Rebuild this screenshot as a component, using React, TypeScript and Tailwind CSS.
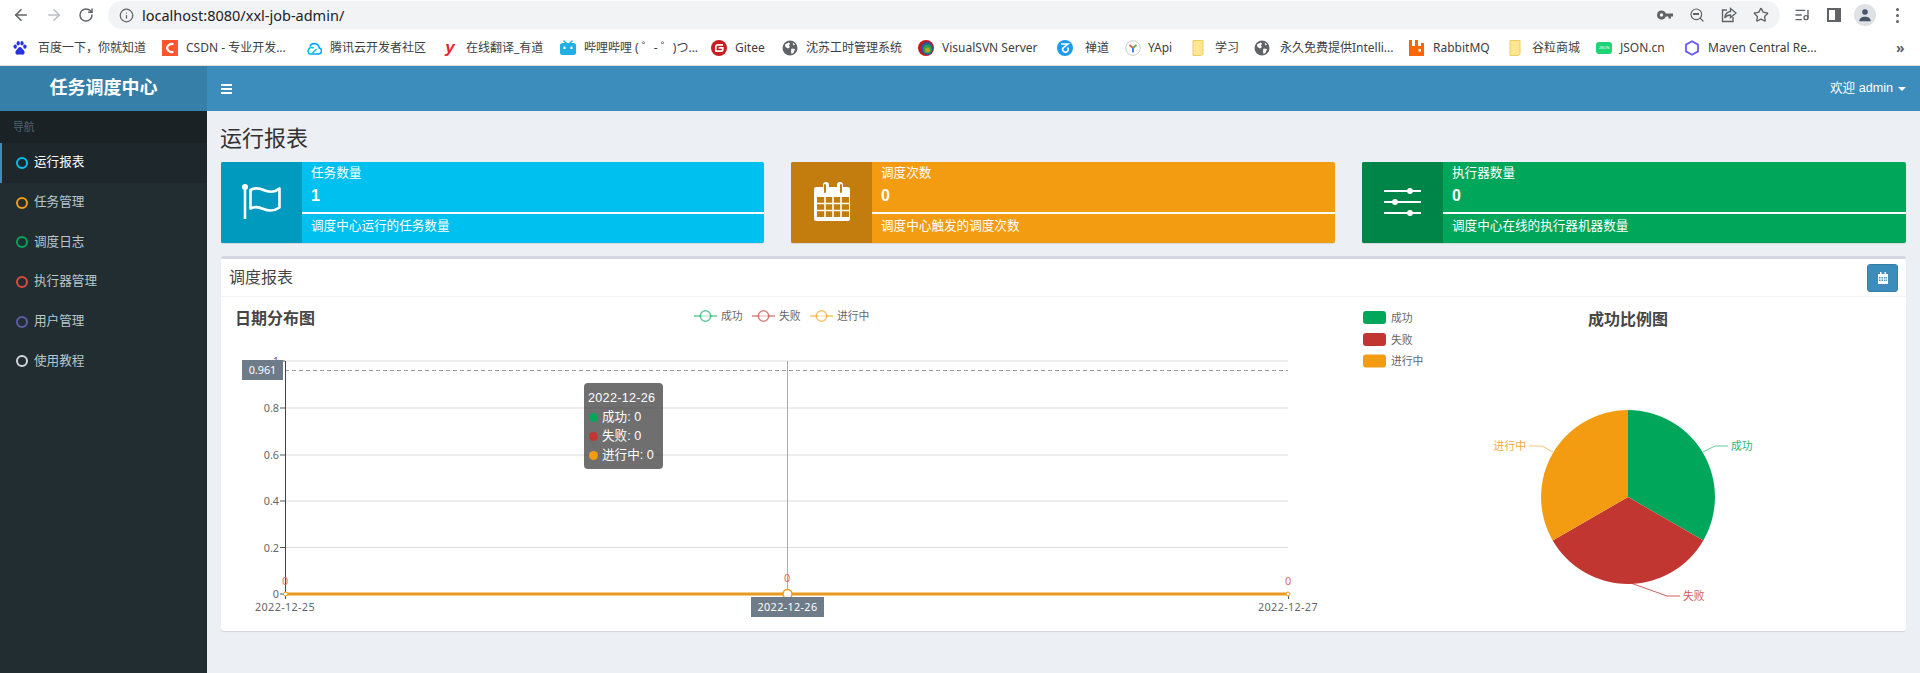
import { ArrowLeft, ArrowRight, Info, ListMusic, RotateCw, Search, Star } from 'lucide-react'

const CJK = 'font-["Liberation_Sans","Noto_Sans_CJK_SC",sans-serif]'

type Mark = 'baidu' | 'csdn' | 'cloud' | 'youdao' | 'bili' | 'gitee' | 'globe' | 'svn' | 'zentao' | 'yapi' | 'folder' | 'rabbit' | 'json' | 'maven'

const bookmarks: Array<{ mark: Mark; label: string; width: string; gap: string }> = [
    { mark: 'baidu', label: '百度一下，你就知道', width: 'w-[150px]', gap: 'ml-[10px]' },
    { mark: 'csdn', label: 'CSDN - 专业开发...', width: 'w-[144px]', gap: 'ml-[8px]' },
    { mark: 'cloud', label: '腾讯云开发者社区', width: 'w-[136px]', gap: 'ml-[8px]' },
    { mark: 'youdao', label: '在线翻译_有道', width: 'w-[118px]', gap: 'ml-[8px]' },
    { mark: 'bili', label: '哔哩哔哩 ( ゜- ゜)つ...', width: 'w-[151px]', gap: 'ml-[8px]' },
    { mark: 'gitee', label: 'Gitee', width: 'w-[71px]', gap: 'ml-[8px]' },
    { mark: 'globe', label: '沈苏工时管理系统', width: 'w-[136px]', gap: 'ml-[8px]' },
    { mark: 'svn', label: 'VisualSVN Server', width: 'w-[139px]', gap: 'ml-[8px]' },
    { mark: 'zentao', label: '禅道', width: 'w-[68px]', gap: 'ml-[12px]' },
    { mark: 'yapi', label: 'YApi', width: 'w-[65px]', gap: 'ml-[7px]' },
    { mark: 'folder', label: '学习', width: 'w-[64px]', gap: 'ml-[9px]' },
    { mark: 'globe', label: '永久免费提供Intelli...', width: 'w-[155px]', gap: 'ml-[10px]' },
    { mark: 'rabbit', label: 'RabbitMQ', width: 'w-[98px]', gap: 'ml-[8px]' },
    { mark: 'folder', label: '谷粒商城', width: 'w-[89px]', gap: 'ml-[9px]' },
    { mark: 'json', label: 'JSON.cn', width: 'w-[88px]', gap: 'ml-[8px]' },
    { mark: 'maven', label: 'Maven Central Re...', width: 'w-[132px]', gap: 'ml-[8px]' },
]

const navItems = [
    { label: '运行报表', ring: 'border-[#00c0ef]', active: true },
    { label: '任务管理', ring: 'border-[#f39c12]', active: false },
    { label: '调度日志', ring: 'border-[#00a65a]', active: false },
    { label: '执行器管理', ring: 'border-[#dd4b39]', active: false },
    { label: '用户管理', ring: 'border-[#605ca8]', active: false },
    { label: '使用教程', ring: 'border-[#d2d6de]', active: false },
]

function Favicon({ mark }: { mark: Mark }) {
    switch (mark) {
        case 'baidu':
            return (
                <svg viewBox="0 0 16 16" className="h-4 w-4 shrink-0" fill="#2932e1">
                    <ellipse cx="3.2" cy="6.6" rx="1.7" ry="2.2" />
                    <ellipse cx="6.2" cy="3.2" rx="1.6" ry="2.2" />
                    <ellipse cx="10" cy="3.2" rx="1.6" ry="2.2" />
                    <ellipse cx="12.9" cy="6.6" rx="1.7" ry="2.2" />
                    <path d="M8 7c-1.6 0-2 1.6-3.2 2.7C3.6 10.8 3 12 3.6 13.4c.6 1.3 2 1.5 3 1.2.9-.2 1.9-.2 2.8 0 1 .3 2.4.1 3-1.2.6-1.4 0-2.6-1.2-3.7C10 8.6 9.6 7 8 7z" />
                </svg>
            )
        case 'csdn':
            return (
                <svg viewBox="0 0 16 16" className="h-4 w-4 shrink-0">
                    <rect width="16" height="16" fill="#fc5531" />
                    <path d="M11.5 4.2A5 5 0 0 0 5 8a5 5 0 0 0 6.5 3.8" fill="none" stroke="#fff" strokeWidth="2.2" />
                </svg>
            )
        case 'cloud':
            return (
                <svg viewBox="0 0 16 16" className="h-4 w-4 shrink-0" fill="none" strokeWidth="1.6">
                    <path d="M3.500 14h9a3 3 0 0 0 .8-5.900A5 5 0 0 0 3.800 6.500" stroke="#00a3ff" />
                    <path d="M10.500 9 6.500 13" stroke="#00c8dc" />
                    <path d="M7.800 8.200A3 3 0 1 0 3.500 14" stroke="#00c8dc" />
                </svg>
            )
        case 'youdao':
            return <span className='w-4 shrink-0 text-center font-["Liberation_Sans",sans-serif] text-[17px] font-bold italic leading-4 text-[#e8232a]'>y</span>
        case 'bili':
            return (
                <svg viewBox="0 0 16 16" className="h-4 w-4 shrink-0">
                    <path d="M4 1l2.4 2.4M12 1 9.6 3.4" stroke="#20b0e3" strokeWidth="1.5" strokeLinecap="round" />
                    <rect y="3" width="16" height="12" rx="2.5" fill="#20b0e3" />
                    <rect x="3.5" y="6.6" width="2" height="2.4" fill="#fff" />
                    <rect x="10.5" y="6.6" width="2" height="2.4" fill="#fff" />
                </svg>
            )
        case 'gitee':
            return (
                <svg viewBox="0 0 16 16" className="h-4 w-4 shrink-0">
                    <circle cx="8" cy="8" r="8" fill="#c71d23" />
                    <path d="M12 4.8H7a2.2 2.2 0 0 0-2.2 2.2v4.2h5a2 2 0 0 0 2-2V7.8H7.6" fill="none" stroke="#fff" strokeWidth="1.7" />
                </svg>
            )
        case 'globe':
            return (
                <svg viewBox="0 0 16 16" className="h-4 w-4 shrink-0">
                    <circle cx="8" cy="8" r="7.5" fill="#5f6368" />
                    <path d="M3 4.5 6.5 2.5l1.5 1-1 2 1 1.5-2 1.5L3.5 7zM9.5 8.5l3.5.5-1.5 4-2 1-.5-3zM10.500 2.500l2.500 2-1.500 1z" fill="#fff" />
                </svg>
            )
        case 'svn':
            return (
                <svg viewBox="0 0 16 16" className="h-4 w-4 shrink-0">
                    <circle cx="8" cy="8" r="8" fill="#c6161f" />
                    <ellipse cx="9" cy="8.500" rx="6" ry="6.500" fill="#1a5fa8" />
                    <circle cx="9.500" cy="9" r="4.500" fill="#2f9d46" />
                    <circle cx="9.500" cy="10" r="2.500" fill="#b7a51c" />
                </svg>
            )
        case 'zentao':
            return (
                <svg viewBox="0 0 16 16" className="h-4 w-4 shrink-0">
                    <circle cx="8" cy="8" r="8" fill="#1d9bf0" />
                    <path d="M4 4h7L6 8a2.800 2.800 0 1 0 4.500-.5" fill="none" stroke="#fff" strokeWidth="1.600" />
                </svg>
            )
        case 'yapi':
            return (
                <svg viewBox="0 0 16 16" className="h-4 w-4 shrink-0" fill="none">
                    <circle cx="8" cy="8" r="7.300" fill="#fff" stroke="#ccc" />
                    <path d="M8 8 4.500 5" stroke="#e65a4f" strokeWidth="1.800" />
                    <path d="M8 8l3.500-3" stroke="#5fb548" strokeWidth="1.800" />
                    <path d="M8 8v4.500" stroke="#2f7fe6" strokeWidth="1.800" />
                </svg>
            )
        case 'folder':
            return (
                <svg viewBox="0 0 16 16" className="h-4 w-4 shrink-0">
                    <path d="M3 .5h10v13.500l-2 1.500H3z" fill="#ffe594" stroke="#f0cc5a" />
                </svg>
            )
        case 'rabbit':
            return (
                <svg viewBox="0 0 16 16" className="h-4 w-4 shrink-0">
                    <path fillRule="evenodd" d="M0 0h3v6h3V0h3v6h3V3h3v13H0zM9.500 9v2.500h2.500V9z" fill="#ff6600" />
                </svg>
            )
        case 'json':
            return (
                <span className='flex h-3 w-4 shrink-0 items-center justify-center rounded-[3px] bg-[#1ed477] font-["Liberation_Sans",sans-serif] text-[4px] text-white'>JSON</span>
            )
        case 'maven':
            return (
                <svg viewBox="0 0 16 16" className="h-4 w-4 shrink-0" fill="none">
                    <path d="M8 1.200 14 4.600v6.800l-6 3.400-6-3.400V4.600z" stroke="#6a5cf0" strokeWidth="1.800" />
                </svg>
            )
    }
}

function BrowserChrome() {
    return (
        <div className='h-[66px] shrink-0 border-b border-[#dadce0] bg-white font-["Noto_Sans","Noto_Sans_CJK_SC",sans-serif] text-[#3c4043]'>
            <div className="flex h-[30px] items-center">
                <div className="flex w-[108px] items-center">
                    <ArrowLeft className="ml-[12px] h-[18px] w-[18px] text-[#5f6368]" strokeWidth={2.2} />
                    <ArrowRight className="ml-[15px] h-[18px] w-[18px] text-[#bcbfc4]" strokeWidth={2.2} />
                    <RotateCw className="ml-[15px] h-[16px] w-[16px] text-[#5f6368]" strokeWidth={2.2} />
                </div>
                <div className="flex h-[28px] w-[1672px] items-center rounded-full bg-[#f1f3f4]">
                    <Info className="ml-[11px] h-[15px] w-[15px] text-[#5f6368]" strokeWidth={2} />
                    <span className="ml-[8px] text-[14.500px] leading-none text-[#202124]">localhost:8080/xxl-job-admin/</span>
                    <div className="ml-auto flex items-center gap-[16px] pr-[11px] text-[#5f6368]">
                        <svg viewBox="0 0 16 16" className="h-4 w-4" fill="currentColor">
                            <path fillRule="evenodd" d="M4.500 3.500a4.500 4.500 0 0 1 4.300 3H16v3h-2v2h-2.500v-2H8.800a4.500 4.500 0 1 1-4.300-6zm0 2.800a1.700 1.700 0 1 0 0 3.400 1.700 1.700 0 0 0 0-3.400z" />
                        </svg>
                        <div className="relative">
                            <Search className="h-4 w-4" strokeWidth={1.800} />
                            <div className="absolute left-[3.500px] top-[6px] h-[1.500px] w-[6px] bg-[#5f6368]" />
                        </div>
                        <svg viewBox="0 0 16 16" className="h-4 w-4" fill="none" stroke="currentColor" strokeWidth="1.400">
                            <path d="M6 3H1.500v11.500h10.500V10" />
                            <path d="M9.500 1.500 15 6l-5.500 4.500V8C7 8 5 9 3.800 11c.2-3.500 2.200-6 5.700-6.500z" />
                        </svg>
                        <Star className="h-4 w-4" strokeWidth={2} />
                    </div>
                </div>
                <div className="flex items-center text-[#5f6368]">
                    <ListMusic className="ml-[14px] h-4 w-4" strokeWidth={2} />
                    <svg viewBox="0 0 14 14" className="ml-[17px] h-[14px] w-[14px]">
                        <rect x="1" y="1" width="12" height="12" fill="none" stroke="currentColor" strokeWidth="2" />
                        <rect x="8" y="1" width="5" height="12" fill="currentColor" />
                    </svg>
                    <div className="ml-[13px] flex h-[22px] w-[22px] items-center justify-center rounded-full bg-[#dfe1e5]">
                        <svg viewBox="0 0 16 16" className="h-[14px] w-[14px]" fill="#475569">
                            <circle cx="8" cy="4.500" r="3.200" />
                            <path d="M1.500 15c0-3.500 3-5 6.500-5s6.500 1.500 6.500 5z" />
                        </svg>
                    </div>
                    <div className="ml-[20px] flex flex-col gap-[3px]">
                        <span className="h-[3px] w-[3px] rounded-full bg-[#5f6368]" />
                        <span className="h-[3px] w-[3px] rounded-full bg-[#5f6368]" />
                        <span className="h-[3px] w-[3px] rounded-full bg-[#5f6368]" />
                    </div>
                </div>
            </div>
            <div className="flex h-[35px] items-center pl-[12px] text-[12px] leading-none">
                {bookmarks.map((b, i) => (
                    <div key={i} className={`flex shrink-0 items-center ${b.width}`}>
                        <Favicon mark={b.mark} />
                        <span className={`whitespace-nowrap ${b.gap}`}>{b.label}</span>
                    </div>
                ))}
                <span className="ml-[80px] text-[14px] font-bold text-[#5f6368]">»</span>
            </div>
        </div>
    )
}

function StatCard({ icon, bg, iconBg, title, value, desc }: { icon: React.ReactNode; bg: string; iconBg: string; title: string; value: string; desc: string }) {
    return (
        <div className={`flex h-[81px] overflow-hidden rounded-[2px] text-white shadow-[0_1px_1px_rgba(0,0,0,0.1)] ${bg}`}>
            <div className={`flex w-[81px] shrink-0 items-center justify-center pb-[2px] ${iconBg}`}>{icon}</div>
            <div className="flex min-w-0 flex-1 flex-col">
                <div className="mt-[2px] px-[9px] text-[12.600px] leading-[18px]">{title}</div>
                <div className="mt-[3px] px-[9px] text-[16px] font-bold leading-[22px]">{value}</div>
                <div className="mt-[5px] h-[2px] bg-white" />
                <div className="px-[9px] text-[12.600px] leading-[24px]">{desc}</div>
            </div>
        </div>
    )
}

const FlagIcon = (
    <svg viewBox="0 0 41 35" className="h-[35px] w-[41px]" fill="none" stroke="#fff" strokeWidth="2.600">
        <path d="M4 3v32" />
        <circle cx="4" cy="3" r="3" fill="#fff" stroke="none" />
        <path d="M9.500 6C14 3.500 18 4 22.500 6s11 2.500 16-1.500v19c-5 3.500-11 3.500-16 1.500S14 22 9.500 24.500z" strokeLinejoin="round" />
    </svg>
)

const CalendarIcon = (
    <svg viewBox="0 0 40 42" className="h-[42px] w-[40px]">
        <path d="M6 6h5V4a3 3 0 0 1 6 0v2h8V4a3 3 0 0 1 6 0v2h5a2 2 0 0 1 2 2v30a2 2 0 0 1-2 2H4a2 2 0 0 1-2-2V8a2 2 0 0 1 2-2z" fill="#fff" />
        <path d="M13 4v7M29 4v7" stroke="#c27d0e" strokeWidth="2" strokeLinecap="round" />
        <path d="M5 16h32v20H5z" fill="#c27d0e" />
        <path d="M5 22.500h32M5 29.500h32M13 15v22M21 15v22M29 15v22" stroke="#fff" strokeWidth="1.600" />
    </svg>
)

const SlidersIcon = (
    <svg viewBox="0 0 37 28" className="h-[28px] w-[37px]" fill="#fff" stroke="#fff" strokeWidth="2.200">
        <path d="M0 3h37M0 14h37M0 25h37" />
        <circle cx="26" cy="3" r="1.800" />
        <circle cx="11" cy="14" r="1.800" />
        <circle cx="26" cy="25" r="1.800" />
    </svg>
)

const chartText = 'font-["Noto_Sans","Noto_Sans_CJK_SC",sans-serif]'

function LineChart() {
    const rows = [361, 408, 455, 501, 547.500, 594]
    const ticks = ['1', '0.8', '0.6', '0.4', '0.2', '0']
    const legend = [
        { x: 694, text: '成功', color: '#00a65a' },
        { x: 752, text: '失败', color: '#c23632' },
        { x: 810, text: '进行中', color: '#f39c12' },
    ]
    return (
        <svg viewBox="221 297 1125 334" className={`h-[334px] w-[1125px] shrink-0 ${chartText}`}>
            <text x="235" y="324" fontSize="16" fontWeight="700" fill="#464646">日期分布图</text>
            {legend.map((l) => (
                <g key={l.text}>
                    <path d={`M${l.x} 316h23`} stroke={l.color} strokeWidth="1.500" opacity="0.6" />
                    <circle cx={l.x + 11.500} cy="316" r="5.200" fill="#fff" stroke={l.color} strokeWidth="1.500" opacity="0.6" />
                    <text x={l.x + 27} y="319.500" fontSize="10.800" fill="#666">{l.text}</text>
                </g>
            ))}
            {rows.slice(0, 5).map((y) => (
                <path key={y} d={`M285 ${y}H1288`} stroke="#dcdcdc" />
            ))}
            <path d="M285 370.500H1288" stroke="#999" strokeDasharray="4 3" />
            <path d="M787.500 361V594" stroke="#aaa" />
            <path d="M285.500 361V599" stroke="#444" />
            {rows.map((y) => (
                <path key={y} d={`M280 ${y}h5`} stroke="#555" />
            ))}
            {ticks.map((t, i) => (
                <text key={t} x="279" y={rows[i] + 4} fontSize="10.800" fill="#666" textAnchor="end">{t}</text>
            ))}
            <path d="M1288.500 594v5M787.500 594v5" stroke="#555" />
            <path d="M285 594H1288" stroke="#e8991f" strokeWidth="3" />
            <circle cx="285.500" cy="594" r="2" fill="#fff" stroke="#f39c12" />
            <circle cx="1288" cy="594" r="2" fill="#fff" stroke="#f39c12" />
            <circle cx="787.500" cy="594" r="4.500" fill="#fff" stroke="#f39c12" strokeWidth="1.500" />
            <text x="285" y="585" fontSize="10.800" fill="#e06a66" textAnchor="middle">0</text>
            <text x="787" y="582" fontSize="10.800" fill="#e06a66" textAnchor="middle">0</text>
            <text x="1288" y="585" fontSize="10.800" fill="#e06a66" textAnchor="middle">0</text>
            <text x="285" y="610.500" fontSize="10.800" letterSpacing="0.350" fill="#666" textAnchor="middle">2022-12-25</text>
            <text x="1288" y="610.500" fontSize="10.800" letterSpacing="0.350" fill="#666" textAnchor="middle">2022-12-27</text>
            <rect x="242" y="360" width="41" height="20" fill="#6e7b88" />
            <text x="262.500" y="374" fontSize="10.800" fill="#fff" textAnchor="middle">0.961</text>
            <rect x="751" y="597" width="73" height="20" fill="#6e7b88" />
            <text x="787.500" y="611" fontSize="10.800" letterSpacing="0.350" fill="#fff" textAnchor="middle">2022-12-26</text>
        </svg>
    )
}

function PieChart() {
    return (
        <svg viewBox="1346 297 560 334" className={`h-[334px] w-[560px] shrink-0 ${chartText}`}>
            <rect x="1363" y="311" width="23" height="13" rx="3" fill="#00a65a" />
            <text x="1391" y="321.500" fontSize="10.800" fill="#666">成功</text>
            <rect x="1363" y="333" width="23" height="13" rx="3" fill="#c23632" />
            <text x="1391" y="343.500" fontSize="10.800" fill="#666">失败</text>
            <rect x="1363" y="354.500" width="23" height="13" rx="3" fill="#f39c12" />
            <text x="1391" y="365" fontSize="10.800" fill="#666">进行中</text>
            <text x="1588" y="325" fontSize="16" fontWeight="700" fill="#464646">成功比例图</text>
            <path d="M1628 497V410A87 87 0 0 1 1703.300 540.500z" fill="#00a65a" />
            <path d="M1628 497L1703.300 540.500A87 87 0 0 1 1552.700 540.500z" fill="#c23632" />
            <path d="M1628 497L1552.700 540.500A87 87 0 0 1 1628 410z" fill="#f39c12" />
            <path d="M1703 452l12-6h13" fill="none" stroke="#00a65a" opacity="0.6" />
            <path d="M1628 582l39 14h13" fill="none" stroke="#c23632" opacity="0.8" />
            <path d="M1553 452l-11-6h-13" fill="none" stroke="#f39c12" opacity="0.6" />
            <text x="1731" y="450" fontSize="10.800" fill="#00a65a" opacity="0.85">成功</text>
            <text x="1683" y="600" fontSize="10.800" fill="#c23632" opacity="0.8">失败</text>
            <text x="1526" y="450" fontSize="10.800" fill="#f39c12" opacity="0.85" textAnchor="end">进行中</text>
        </svg>
    )
}

export default function App() {
    return (
        <div className={`flex h-[673px] flex-col overflow-hidden ${CJK}`}>
            <BrowserChrome />
            <header className="flex h-[45px] shrink-0 bg-[#3c8dbc] text-white">
                <div className="flex w-[207px] items-center justify-center bg-[#367fa9] text-[18px] font-bold">任务调度中心</div>
                <div className="ml-[14px] flex flex-col justify-center gap-[2px]">
                    <span className="h-[2px] w-[11px] bg-white" />
                    <span className="h-[2px] w-[11px] bg-white" />
                    <span className="h-[2px] w-[11px] bg-white" />
                </div>
                <div className="ml-auto flex items-center pr-[14px] text-[12.600px]">
                    欢迎 admin
                    <span className="ml-[5px] h-0 w-0 border-x-[4px] border-t-[4px] border-x-transparent border-t-white" />
                </div>
            </header>
            <div className="flex min-h-0 flex-1">
                <aside className="w-[207px] shrink-0 bg-[#222d32]">
                    <div className="flex h-[32px] items-center bg-[#1a2226] pl-[13px] text-[10.800px] text-[#4b646f]">导航</div>
                    {navItems.map((item) => (
                        <div
                            key={item.label}
                            className={`flex h-[39.700px] items-center border-l-2 pl-[14px] text-[12.600px] ${item.active ? 'border-[#3c8dbc] bg-[#1e282c] text-white' : 'border-transparent text-[#b8c7ce]'}`}
                        >
                            <span className={`h-[12px] w-[12px] rounded-full border-2 ${item.ring}`} />
                            <span className="ml-[6px]">{item.label}</span>
                        </div>
                    ))}
                </aside>
                <main className="min-w-0 flex-1 bg-[#ecf0f5] px-[14px]">
                    <h1 className="-ml-[1px] flex h-[51px] items-center pt-[3px] text-[22px] font-normal text-[#333]">运行报表</h1>
                    <div className="grid grid-cols-[543px_544px_544px] gap-x-[27px]">
                        <StatCard icon={FlagIcon} bg="bg-[#00c0ef]" iconBg="bg-[#009abf]" title="任务数量" value="1" desc="调度中心运行的任务数量" />
                        <StatCard icon={CalendarIcon} bg="bg-[#f39c12]" iconBg="bg-[#c27d0e]" title="调度次数" value="0" desc="调度中心触发的调度次数" />
                        <StatCard icon={SlidersIcon} bg="bg-[#00a65a]" iconBg="bg-[#008548]" title="执行器数量" value="0" desc="调度中心在线的执行器机器数量" />
                    </div>
                    <section className="mt-[13px] rounded-[3px] border-t-[3px] border-[#d2d6de] bg-white shadow-[0_1px_1px_rgba(0,0,0,0.1)]">
                        <div className="flex h-[38px] items-center justify-between border-b border-[#f4f4f4] pl-[8px] pr-[8px]">
                            <h3 className="text-[16px] font-normal text-[#444]">调度报表</h3>
                            <button type="button" className="flex h-[28px] w-[31px] items-center justify-center rounded-[3px] border border-[#367fa9] bg-[#3c8dbc]">
                                <svg viewBox="0 0 10 12" className="h-[12px] w-[10px]" fill="#fff">
                                    <path fillRule="evenodd" d="M0 2h2V0h1.500v2h3V0H8v2h2v10H0zM1 5v1.500h1.500V5zM3.500 5v1.500H5V5zM6 5v1.500h1.500V5zM8.200 5v1.500H9V5zM1 7.500V9h1.500V7.500zM3.500 7.500V9H5V7.500zM6 7.500V9h1.500V7.500zM8.200 7.500V9H9V7.500z" />
                                </svg>
                            </button>
                        </div>
                        <div className="relative flex h-[334px]">
                            <LineChart />
                            <PieChart />
                            <div className="absolute left-[363px] top-[86px] w-[79px] rounded-[4px] bg-[rgba(50,50,50,0.7)] pb-[4px] pl-[4px] pt-[6px] text-[12.600px] leading-[19px] text-white">
                                <div className="whitespace-nowrap tracking-[0.3px]">2022-12-26</div>
                                <div className="flex items-center whitespace-nowrap"><span className="ml-[1px] mr-[4px] h-[9px] w-[9px] rounded-full bg-[#00a65a]" />成功: 0</div>
                                <div className="flex items-center whitespace-nowrap"><span className="ml-[1px] mr-[4px] h-[9px] w-[9px] rounded-full bg-[#c23632]" />失败: 0</div>
                                <div className="flex items-center whitespace-nowrap"><span className="ml-[1px] mr-[4px] h-[9px] w-[9px] rounded-full bg-[#f39c12]" />进行中: 0</div>
                            </div>
                        </div>
                    </section>
                </main>
            </div>
        </div>
    )
}
